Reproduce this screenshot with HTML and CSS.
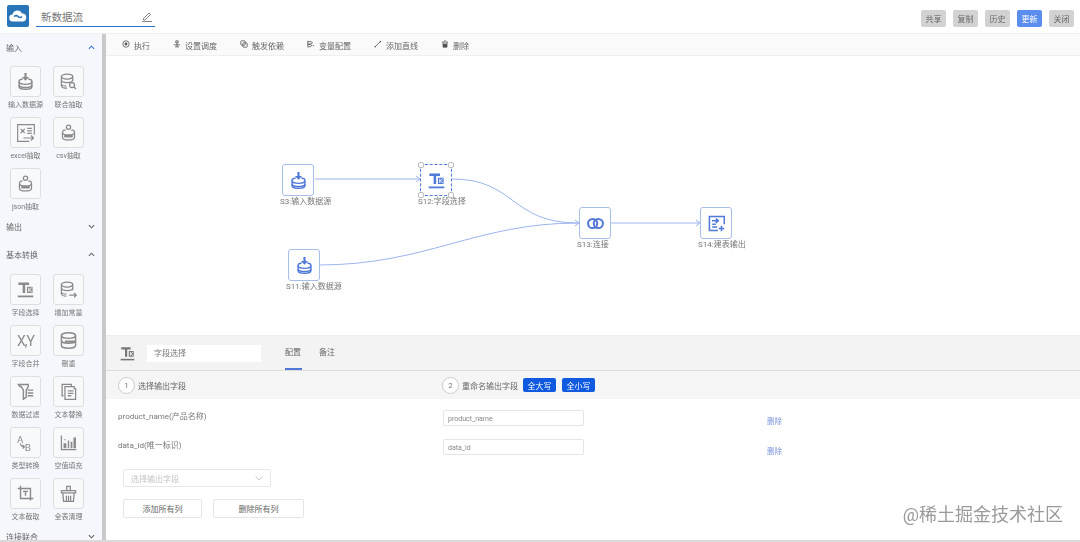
FILE: index.html
```html
<!DOCTYPE html>
<html lang="zh-CN">
<head>
<meta charset="utf-8">
<title>新数据流</title>
<link rel="stylesheet" href="styles.css">
</head>
<body>
<svg class="defs" width="0" height="0" aria-hidden="true">
  <defs>
    <symbol id="i-input" viewBox="0 0 24 24"><g fill="none" stroke="currentColor" stroke-width="2"><path d="M8 8.500C5 9 3 10 3 11.500v8c0 2 4 3.500 9 3.500s9-1.500 9-3.500v-8c0-1.500-2-2.500-5-3"/><path d="M3 12.500c0 2 4 3.500 9 3.500s9-1.500 9-3.500M3 17c0 2 4 3.500 9 3.500s9-1.500 9-3.500"/></g><path d="M10.500 0h3v5.500H17L12 11 7 5.500h3.500z" fill="currentColor"/></symbol>
    <symbol id="i-union" viewBox="0 0 24 24"><g fill="none" stroke="currentColor" stroke-width="1.800"><ellipse cx="10" cy="5" rx="8" ry="3.500"/><path d="M2 5v13c0 2 3.500 3.500 8 3.500M18 5v6M2 10c0 2 3.500 3.500 8 3.500s8-1.500 8-3.500M2 15c0 2 3.500 3.500 7 3.500"/><circle cx="17" cy="17" r="3.500"/><path d="M19.500 19.500l3 3"/></g></symbol>
    <symbol id="i-excel" viewBox="0 0 24 24"><g fill="none" stroke="currentColor" stroke-width="1.400"><path d="M22 14V2H2v20h14"/><path d="M5.500 7l5 5M10.500 7l-5 5M13.500 6.500H19M13.500 9.500H19M13.500 12.500H19M9 18h12M18 15l3 3-3 3"/></g></symbol>
    <symbol id="i-csv" viewBox="0 0 24 24"><g fill="none" stroke="currentColor" stroke-width="1.800"><circle cx="12" cy="4.500" r="3"/><path d="M8 8.500H5.500c-1.500 1-2 2-2 3.500v7c0 2 3.500 3.500 8.500 3.500s8.500-1.500 8.500-3.500v-7c0-1.500-.5-2.500-2-3.500H16"/><path d="M3.500 12c0 2 3.500 3.500 8.500 3.500s8.500-1.500 8.500-3.500"/></g><rect x="6" y="15.500" width="12" height="3.500" fill="currentColor"/></symbol>
    <symbol id="i-field" viewBox="0 0 24 24"><path d="M2 2h15v3.500h-5.500V17H8V5.500H2zM14 8h8v9h-8z" fill="currentColor"/><path d="M16.600 9.500v6M20.800 9.500l-3.500 3 3.700 3" fill="none" stroke="#fff" stroke-width="1.300"/><path d="M1 20.500h22V23H1z" fill="currentColor"/></symbol>
    <symbol id="i-addcol" viewBox="0 0 24 24"><g fill="none" stroke="currentColor" stroke-width="1.800"><ellipse cx="10" cy="5" rx="8" ry="3.500"/><path d="M2 5v13c0 2 3.500 3.500 7 3.500M18 5v8M2 10c0 2 3.500 3.500 8 3.500s8-1.500 8-3.500M2 15c0 2 3.500 3.500 7 3.500M13 20h10M20 17l3 3-3 3"/></g></symbol>
    <symbol id="i-dedupe" viewBox="0 0 24 24"><g fill="none" stroke="currentColor" stroke-width="2"><ellipse cx="12" cy="5" rx="10" ry="4"/><path d="M2 5v14c0 2.200 4.500 4 10 4s10-1.800 10-4V5"/><path d="M2 12c0 2.200 4.500 4 10 4s10-1.800 10-4"/></g><path d="M7 12h14v3H7z" fill="currentColor"/></symbol>
    <symbol id="i-filter" viewBox="0 0 24 24"><path d="M2 2h14v3l-3 5v10l-4 3V10L6 5H4z" fill="none" stroke="currentColor" stroke-width="2"/><path d="M15 9h8v2h-8zM15 13h8v2h-8zM15 17h8v2h-8z" fill="currentColor"/></symbol>
    <symbol id="i-text" viewBox="0 0 24 24"><g fill="none" stroke="currentColor" stroke-width="1.800"><path d="M5 18H3V2h13v3"/><path d="M7 5h13v3h2v15H7z"/><path d="M11 11h8M11 14.500h8M11 18h5"/></g></symbol>
    <symbol id="i-type" viewBox="0 0 24 24"><text x="0" y="12" class="glyph">A</text><text x="11" y="24" class="glyph">B</text><path d="M5 13c0 3 2 5 5 5M8 15.500l2.500 2.500L8 20.500" fill="none" stroke="currentColor" stroke-width="1.600"/></symbol>
    <symbol id="i-fill" viewBox="0 0 24 24"><path d="M2 2v20h21" fill="none" stroke="currentColor" stroke-width="1.800"/><path d="M5 13h4v7H5zM11 9h2v11h-2zM15 11h2.500v9H15zM19 5h3.500v15H19z" fill="currentColor"/><circle cx="7" cy="8" r="1" fill="currentColor"/></symbol>
    <symbol id="i-crop" viewBox="0 0 24 24"><g fill="none" stroke="currentColor" stroke-width="2"><path d="M1 5h18v17M5 1v18h18"/><path d="M8.500 9h7M12 9v6"/></g></symbol>
    <symbol id="i-clean" viewBox="0 0 24 24"><g fill="none" stroke="currentColor" stroke-width="1.800"><path d="M9.500 7V2h5v5M2 8h20v3H2zM4 11l1 12h14l1-12M9 15v8M12 15v8M15 15v8"/></g></symbol>
    <symbol id="i-join" viewBox="0 0 24 24"><g fill="none" stroke="currentColor" stroke-width="2.800"><circle cx="8" cy="12" r="6.500"/><circle cx="16" cy="12" r="6.500"/></g></symbol>
    <symbol id="i-output" viewBox="0 0 24 24"><g fill="none" stroke="currentColor" stroke-width="2.200"><path d="M23 13V2H2v20h12"/><path d="M5.500 8H14M11 5l3.500 3-3.500 3M6 13h5M6 17h7M15 19h8M19 15v8"/></g></symbol>
  </defs>
</svg>

<header class="topbar">
  <div class="logo">
    <svg width="18" height="14" viewBox="0 0 18 14"><path d="M4 12.500a3.500 3.500 0 0 1-.5-7A5 5 0 0 1 13 4.500a4 4 0 0 1 .5 8z" fill="#fff"/><path d="M5 7.500c2-1.500 3-1 4 0s2.500 1.500 4 0" fill="none" stroke="#2a74b8" stroke-width="1.500"/></svg>
  </div>
  <div class="flow-name">
    <span>新数据流</span>
    <svg width="10" height="11" viewBox="0 0 10 11"><path d="M1.500 7.500L7 2l1.500 1.500L3 9H1.500zM0 10.500h10" fill="none" stroke="#666" stroke-width=".8"/></svg>
  </div>
  <nav class="top-actions">
    <button class="top-btn">共享</button>
    <button class="top-btn">复制</button>
    <button class="top-btn">历史</button>
    <button class="top-btn top-btn-primary">更新</button>
    <button class="top-btn">关闭</button>
  </nav>
</header>

<div class="workspace">
  <aside class="palette">
    <div class="group-head"><span>输入</span><svg class="chev chev-blue" viewBox="0 0 8 5"><path d="M1 4l3-3 3 3"/></svg></div>
    <div class="tool-grid">
      <div class="tool"><div class="tool-card"><svg class="tool-icon"><use href="#i-input"/></svg></div><span>输入数据源</span></div>
      <div class="tool"><div class="tool-card"><svg class="tool-icon"><use href="#i-union"/></svg></div><span>联合抽取</span></div>
      <div class="tool"><div class="tool-card"><svg class="tool-icon tool-icon-lg"><use href="#i-excel"/></svg></div><span>excel抽取</span></div>
      <div class="tool"><div class="tool-card"><svg class="tool-icon"><use href="#i-csv"/></svg></div><span>csv抽取</span></div>
      <div class="tool"><div class="tool-card"><svg class="tool-icon"><use href="#i-csv"/></svg></div><span>json抽取</span></div>
    </div>
    <div class="group-head"><span>输出</span><svg class="chev" viewBox="0 0 8 5"><path d="M1 1l3 3 3-3"/></svg></div>
    <div class="group-head"><span>基本转换</span><svg class="chev" viewBox="0 0 8 5"><path d="M1 4l3-3 3 3"/></svg></div>
    <div class="tool-grid tool-grid-basic">
      <div class="tool"><div class="tool-card"><svg class="tool-icon"><use href="#i-field"/></svg></div><span>字段选择</span></div>
      <div class="tool"><div class="tool-card"><svg class="tool-icon"><use href="#i-addcol"/></svg></div><span>增加常量</span></div>
      <div class="tool"><div class="tool-card tool-card-xy">X,Y</div><span>字段合并</span></div>
      <div class="tool"><div class="tool-card"><svg class="tool-icon"><use href="#i-dedupe"/></svg></div><span>刪重</span></div>
      <div class="tool"><div class="tool-card"><svg class="tool-icon"><use href="#i-filter"/></svg></div><span>数据过滤</span></div>
      <div class="tool"><div class="tool-card"><svg class="tool-icon"><use href="#i-text"/></svg></div><span>文本替换</span></div>
      <div class="tool"><div class="tool-card"><svg class="tool-icon"><use href="#i-type"/></svg></div><span>类型转换</span></div>
      <div class="tool"><div class="tool-card"><svg class="tool-icon"><use href="#i-fill"/></svg></div><span>空值填充</span></div>
      <div class="tool"><div class="tool-card"><svg class="tool-icon"><use href="#i-crop"/></svg></div><span>文本截取</span></div>
      <div class="tool"><div class="tool-card"><svg class="tool-icon"><use href="#i-clean"/></svg></div><span>全表清理</span></div>
    </div>
    <div class="group-head"><span>连接联合</span><svg class="chev" viewBox="0 0 8 5"><path d="M1 1l3 3 3-3"/></svg></div>
  </aside>

  <main class="editor">
    <div class="toolbar">
      <span class="tb-item"><svg viewBox="0 0 10 10"><circle cx="5" cy="5" r="4"/><circle class="solid" cx="5" cy="5" r="1.800"/></svg>执行</span>
      <span class="tb-item"><svg viewBox="0 0 10 10"><path d="M3.500 3.500h3v-2.500h-3zM1 6h8M2.500 8.500h5"/><path d="M5 3.500v5"/></svg>设置调度</span>
      <span class="tb-item"><svg viewBox="0 0 10 10"><rect x="1" y="1" width="5.500" height="5.500" rx="1"/><rect x="3.500" y="3.500" width="5.500" height="5.500" rx="1"/></svg>触发依赖</span>
      <span class="tb-item"><svg viewBox="0 0 10 10"><path d="M1 1v8M1 2h4l2 1.500L5 5H1M1 5.500h3l2 1.500-2 1.500H1M7 7h2"/></svg>变量配置</span>
      <span class="tb-item"><svg viewBox="0 0 10 10"><path d="M1.500 8.500l6-6"/><circle class="solid" cx="8" cy="2" r="1"/><circle class="solid" cx="1.500" cy="8.500" r="1"/></svg>添加直线</span>
      <span class="tb-item"><svg viewBox="0 0 10 10"><path d="M1.500 2.500h7M2.500 2.500v6.500h5v-6.500M4 1h2"/><path d="M2.500 4.500h5v4.500h-5z" class="solid"/></svg>删除</span>
    </div>

    <section class="canvas">
      <svg class="edges" width="974" height="279" viewBox="0 0 974 279">
        <g fill="none" stroke="#9db4ee" stroke-width="1">
          <path d="M209 123H313"/>
          <path d="M346 123C410 123 404 167 472 167"/>
          <path d="M213 209C320 209 370 167 472 167"/>
          <path d="M505 167H593"/>
          <path d="M310 120l4 3-4 3M469 164l4 3-4 3M590 164l4 3-4 3"/>
        </g>
      </svg>
      <div class="node node-s3"><div class="node-box"><svg class="node-icon"><use href="#i-input"/></svg></div><span>S3:输入数据源</span></div>
      <div class="node node-s12"><div class="node-box node-box-selected"><i class="handle h-tl"></i><i class="handle h-tr"></i><i class="handle h-bl"></i><i class="handle h-br"></i><svg class="node-icon"><use href="#i-field"/></svg></div><span>S12:字段选择</span></div>
      <div class="node node-s11"><div class="node-box"><svg class="node-icon"><use href="#i-input"/></svg></div><span>S11:输入数据源</span></div>
      <div class="node node-s13"><div class="node-box"><svg class="node-icon"><use href="#i-join"/></svg></div><span>S13:连接</span></div>
      <div class="node node-s14"><div class="node-box"><svg class="node-icon"><use href="#i-output"/></svg></div><span>S14:建表输出</span></div>
    </section>

    <section class="panel">
      <div class="panel-head">
        <svg class="panel-icon"><use href="#i-field"/></svg>
        <div class="panel-name">字段选择</div>
        <div class="tabs">
          <span class="tab tab-active">配置</span>
          <span class="tab">备注</span>
        </div>
      </div>
      <div class="steps">
        <div class="step step-left"><b>1</b><span>选择输出字段</span></div>
        <div class="step"><b>2</b><span>重命名输出字段</span><button class="case-btn">全大写</button><button class="case-btn">全小写</button></div>
      </div>
      <div class="form">
        <div class="field-row">
          <label>product_name(产品名称)</label>
          <div class="text-input">product_name</div>
          <a class="del">删除</a>
        </div>
        <div class="field-row">
          <label>data_id(唯一标识)</label>
          <div class="text-input">data_id</div>
          <a class="del">删除</a>
        </div>
        <div class="select">选择输出字段<svg width="8" height="5" viewBox="0 0 8 5"><path d="M.5.500L4 4 7.500.5" fill="none" stroke="#c8c8c8"/></svg></div>
        <div class="bulk">
          <button class="bulk-btn bulk-add">添加所有列</button>
          <button class="bulk-btn bulk-del">删除所有列</button>
        </div>
      </div>
    </section>
  </main>
</div>
<div class="watermark">@稀土掘金技术社区</div>
</body>
</html>
```
FILE: styles.css
```css
* { box-sizing: border-box; }
html, body { margin: 0; height: 542px; overflow: hidden; }
body {
  position: relative;
  background: #fff;
  color: #666;
  font-family: Roboto, "Noto Sans CJK SC", sans-serif;
  font-size: 8px;
  border-bottom: 2px solid #d9d9d9;
  filter: blur(.35px);
}
.defs { position: absolute; }
.glyph { font-family: Roboto, sans-serif; font-size: 14px; fill: currentColor; }

/* header */
.topbar {
  height: 33px;
  display: flex;
  align-items: flex-start;
  padding: 5px 6px 0 7px;
  background: #fff;
}
.logo {
  width: 22px;
  height: 22px;
  border-radius: 2px;
  background: #2a74b8;
  display: flex;
  align-items: center;
  justify-content: center;
}
.flow-name {
  width: 119px;
  height: 22px;
  margin-left: 7px;
  padding: 2px 3px 0 5px;
  display: flex;
  align-items: center;
  justify-content: space-between;
  border-bottom: 1px solid #2f6fd0;
  font-size: 10.500px;
  color: #777;
}
.top-actions { margin-left: auto; margin-top: 5px; display: flex; gap: 7px; }
.top-btn {
  width: 25px;
  height: 17px;
  padding: 0;
  border: 0;
  border-radius: 2px;
  background: #d2d2d2;
  color: #666;
  font: inherit;
}
.top-btn-primary { background: #5b8def; color: #fff; }

/* layout */
.workspace { display: flex; height: 507px; border-top: 1px solid #eee; }
.palette {
  flex: 0 0 106px;
  overflow: hidden;
  background: #f5f7fc;
  border-right: 4px solid #c9c9c9;
}
.group-head {
  height: 28px;
  padding: 0 7px 2px 6px;
  display: flex;
  align-items: center;
  justify-content: space-between;
  color: #666;
}
.chev { width: 7px; height: 5px; fill: none; stroke: #666; stroke-width: 1.300; }
.chev-blue { stroke: #3a78d0; }
.tool-grid {
  display: grid;
  grid-template-columns: 31px 31px;
  column-gap: 12px;
  row-gap: 6px;
  padding: 4px 0 0 10px;
}
.tool-grid-basic { padding-top: 5px; }
.tool { height: 45px; display: flex; flex-direction: column; align-items: center; }
.tool span { margin-top: 2px; font-size: 7px; line-height: 12px; white-space: nowrap; color: #777; }
.tool-card {
  flex: 0 0 31px;
  width: 31px;
  display: flex;
  align-items: center;
  justify-content: center;
  background: #f8f9fb;
  border: 1px solid #dedede;
  border-radius: 3px;
  color: #8a8a8a;
}
.tool-card-xy { font-size: 14px; letter-spacing: -1px; }
.tool-icon { width: 17px; height: 17px; }
.tool-icon-lg { width: 20px; height: 20px; }

/* toolbar */
.editor { flex: 1; min-width: 0; display: flex; flex-direction: column; }
.toolbar {
  flex: 0 0 22px;
  display: flex;
  align-items: center;
  gap: 23px;
  padding: 1px 0 0 16px;
  background: #fafafa;
  border-bottom: 1px solid #efefef;
}
.tb-item { display: flex; align-items: center; gap: 4px; color: #666; white-space: nowrap; }
.tb-item svg { width: 8px; height: 8px; margin-top: -2px; fill: none; stroke: #555; stroke-width: 1; }
.tb-item svg .solid { fill: #555; stroke: none; }

/* canvas */
.canvas { position: relative; flex: 0 0 279px; background: #fff; }
.edges { position: absolute; left: 0; top: 0; }
.node { position: absolute; width: 32px; height: 32px; }
.node span {
  position: absolute;
  left: -2px;
  top: 32px;
  font-size: 8px;
  line-height: 12px;
  white-space: nowrap;
  color: #777;
}
.node-box {
  position: relative;
  width: 32px;
  height: 32px;
  display: flex;
  align-items: center;
  justify-content: center;
  background: #fff;
  border: 1px solid #a9bde9;
  border-radius: 3px;
  color: #4f78d8;
}
.node-box-selected { border: 1px dashed #4f78d8; border-radius: 0; }
.node-icon { width: 17px; height: 17px; }
.handle {
  position: absolute;
  z-index: 1;
  width: 6px;
  height: 6px;
  background: #fff;
  border: 1px solid #bbb;
  border-radius: 2px;
}
.h-tl { left: -3px; top: -3px; }
.h-tr { right: -3px; top: -3px; }
.h-bl { left: -3px; bottom: -3px; }
.h-br { right: -3px; bottom: -3px; }
.node-s3 { left: 176px; top: 108px; }
.node-s12 { left: 314px; top: 108px; }
.node-s11 { left: 182px; top: 193px; }
.node-s13 { left: 473px; top: 151px; }
.node-s14 { left: 594px; top: 151px; }

/* panel */
.panel { flex: 1; min-height: 0; position: relative; background: #fff; }
.panel-head {
  height: 36px;
  display: flex;
  align-items: flex-start;
  padding: 10px 0 0 14px;
  background: #f3f3f3;
  border-top: 1px solid #ededed;
  border-bottom: 1px solid #ddd;
}
.panel-icon { width: 15px; height: 15px; color: #777; flex: none; }
.panel-name {
  width: 114px;
  height: 17px;
  margin: -1px 0 0 12px;
  padding-left: 7px;
  background: #fff;
  line-height: 17px;
  color: #777;
}
.tabs { display: flex; gap: 17px; margin-left: 24px; }
.tab { height: 25px; width: 17px; margin-top: -1px; padding-top: 2px; line-height: 12px; color: #666; }
.tab-active { border-bottom: 2px solid #4f78d8; }
.steps {
  height: 28px;
  display: flex;
  align-items: center;
  padding-left: 12px;
  background: #f5f5f5;
}
.step { display: flex; align-items: center; gap: 3px; }
.step-left { width: 324px; }
.step b {
  width: 17px;
  height: 17px;
  display: flex;
  align-items: center;
  justify-content: center;
  border: 1px solid #ccc;
  border-radius: 50%;
  background: #fff;
  font-weight: 400;
  color: #777;
}
.case-btn {
  width: 33px;
  height: 14px;
  padding: 0;
  border: 0;
  border-radius: 2px;
  background: #0f5ae0;
  color: #fff;
  font: inherit;
}
.case-btn:first-of-type { margin-left: 2px; }
.case-btn + .case-btn { margin-left: 3px; }
.form { padding: 11px 0 0 12px; }
.field-row { height: 29px; display: flex; align-items: flex-start; }
.field-row label { width: 325px; line-height: 12px; padding-top: 1px; color: #777; }
.text-input {
  width: 141px;
  height: 16px;
  padding-left: 4px;
  border: 1px solid #e5e5e5;
  border-radius: 2px;
  font-size: 7px;
  line-height: 16px;
  color: #888;
}
.del { margin: 6px 0 0 183px; font-size: 7.500px; line-height: 12px; color: #7d93dd; }
.field-row + .field-row .del { margin-top: 7px; }
.select {
  width: 148px;
  height: 18px;
  margin: 1px 0 12px 5px;
  padding: 0 7px;
  display: flex;
  align-items: center;
  justify-content: space-between;
  border: 1px solid #e8e8e8;
  border-radius: 2px;
  color: #c4c4c4;
}
.bulk { display: flex; gap: 11px; margin-left: 5px; }
.bulk-btn {
  height: 19px;
  padding: 0;
  background: #fff;
  border: 1px solid #e5e5e5;
  border-radius: 2px;
  color: #666;
  font: inherit;
}
.bulk-add { width: 79px; }
.bulk-del { width: 91px; }

.watermark {
  position: absolute;
  right: 17px;
  top: 503px;
  font-size: 18px;
  line-height: 24px;
  color: #9a9a9a;
}
```
